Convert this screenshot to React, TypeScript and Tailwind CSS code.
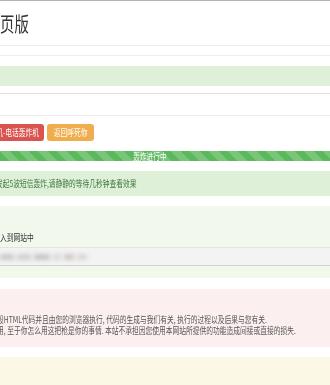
import React from "react";

export default function App() {
  return (
    <div className="w-[330px] h-[385px] overflow-hidden bg-white font-['Noto_Sans_CJK_SC','Noto_Sans',sans-serif]">
      <div className="border-t border-[#b3b3b3]" />
      <div className="h-[44px] pt-[10px] overflow-hidden">
        <div className="inline-block scale-x-[0.72] origin-left text-[20px] leading-[26px] text-[#333] whitespace-nowrap">页版</div>
      </div>
      <div className="border-t border-[#ededed]" />
      <div className="h-[9px]" />
      <div className="border-t border-[#eeeeee] pt-[10px]">
        <div className="h-[20px] bg-[#dff0d8]" />
      </div>
      <div className="h-[7px]" />
      <div className="border-t border-[#e2e2e2]" />
      <div className="h-[21px]" />
      <div className="border-t border-[#ececec]" />
      <div className="h-[8px]" />
      <div className="flex gap-[3px] h-[17px]">
        <div className="w-[44px] h-full bg-[#d9534f] rounded-r-[3px] flex items-center justify-end pr-[5px] overflow-hidden">
          <span className="inline-block scale-x-[0.75] origin-right text-[9px] leading-none text-white whitespace-nowrap">轰炸机-电话轰炸机</span>
        </div>
        <div className="w-[47px] h-full bg-[#f0ad4e] rounded-[3px] flex items-center justify-center">
          <span className="inline-block scale-x-[0.75] origin-center text-[9px] leading-none text-white whitespace-nowrap">返回呼死你</span>
        </div>
      </div>
      <div className="h-[10px]" />
      <div className="h-[10px] bg-[#5cb85c] bg-[linear-gradient(45deg,rgba(255,255,255,.18)_25%,transparent_25%,transparent_50%,rgba(255,255,255,.18)_50%,rgba(255,255,255,.18)_75%,transparent_75%,transparent)] bg-[length:19px_19px] flex items-center pl-[133px]">
        <span className="inline-block scale-x-[0.75] origin-left text-[9px] leading-none text-white whitespace-nowrap">轰炸进行中</span>
      </div>
      <div className="h-[10px]" />
      <div className="h-[25px] bg-[#dff0d8] flex items-center overflow-hidden">
        <span className="inline-block -ml-[4px] scale-x-[0.75] origin-left text-[9px] leading-none text-[#3c763d] whitespace-nowrap">发起5波短信轰炸,请静静的等待几秒钟查看效果</span>
      </div>
      <div className="h-[10px]" />
      <div className="h-[72px] bg-[#f3f8ec] pt-[26px] overflow-hidden">
        <div className="h-[10px] flex items-center">
          <span className="inline-block scale-x-[0.75] origin-left text-[9px] leading-none text-[#333] whitespace-nowrap">入到网站中</span>
        </div>
        <div className="h-[5px]" />
        <div className="h-[19px] bg-[#f3f3f3] border-t border-[#e3e3e3] border-b border-b-[#d2d2d2] flex items-center gap-[3px] overflow-hidden">
          <span className="w-[14px] h-[6px] bg-[#c9c9c9] blur-[2px]" />
          <span className="w-[14px] h-[6px] bg-[#cfcfcf] blur-[2px]" />
          <span className="w-[16px] h-[6px] bg-[#c6c6c6] blur-[2px]" />
          <span className="w-[8px] h-[6px] bg-[#d8d8d8] blur-[2px]" />
          <span className="w-[10px] h-[6px] bg-[#d0c7c4] blur-[2px]" />
          <span className="w-[10px] h-[6px] bg-[#d6d6d6] blur-[2px]" />
        </div>
      </div>
      <div className="h-[11px]" />
      <div className="h-[58px] bg-[#fbefef] pt-[25px] overflow-hidden">
        <div className="-ml-[3px] w-[440px] scale-x-[0.75] origin-left text-[9px] leading-[11px] text-[#555] whitespace-nowrap">
          <div>段HTML代码并且由您的浏览器执行, 代码的生成与我们有关, 执行的过程以及后果与您有关.</div>
          <div>用, 至于你怎么用这把枪是你的事情. 本站不承担因您使用本网站所提供的功能造成间接或直接的损失.</div>
        </div>
      </div>
      <div className="h-[10px]" />
      <div className="h-[40px] bg-[#fcf8e6]" />
    </div>
  );
}
